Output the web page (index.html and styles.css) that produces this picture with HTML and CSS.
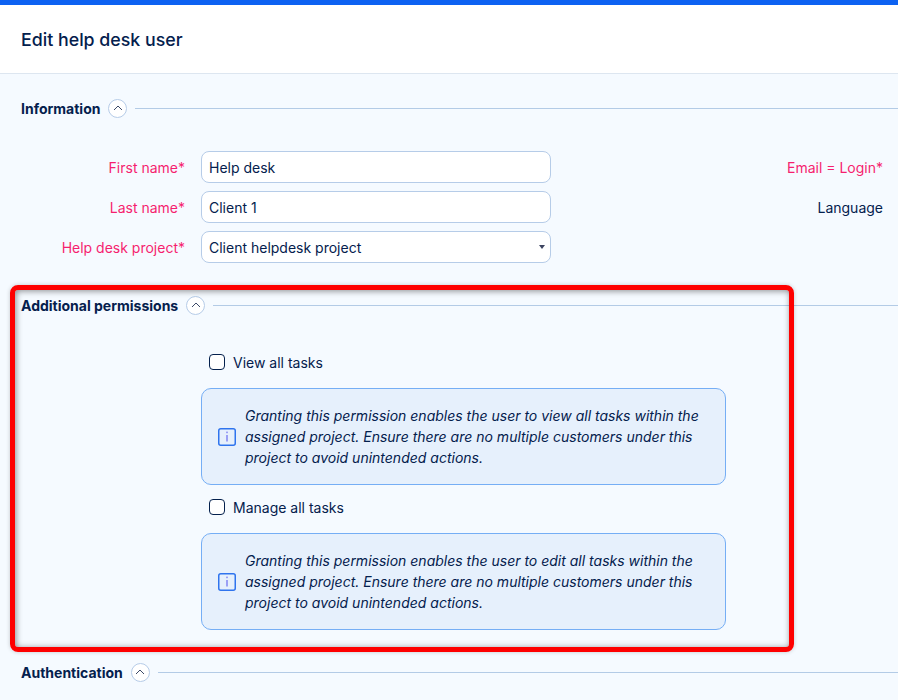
FILE: index.html
```html
<!DOCTYPE html>
<html lang="en">
<head>
<meta charset="utf-8">
<title>Edit help desk user</title>
<link rel="stylesheet" href="styles.css">
</head>
<body>
<div class="page">
  <header class="header"><h1>Edit help desk user</h1></header>
  <main class="content">
    <section class="section info">
      <div class="section-head">
        <h2>Information</h2>
        <button class="toggle" type="button" aria-label="Collapse"><svg viewBox="0 0 10 6" width="10" height="6"><path d="M1 5 L5 1 L9 5" fill="none" stroke="#3c4a68" stroke-width="1"/></svg></button>
        <span class="rule"></span>
      </div>
      <div class="form">
        <div class="form-left">
          <div class="row"><label class="req">First name*</label><input class="field" type="text" value="Help desk"></div>
          <div class="row"><label class="req">Last name*</label><input class="field" type="text" value="Client 1"></div>
          <div class="row"><label class="req">Help desk project*</label>
            <div class="field select">Client helpdesk project<span class="caret"></span></div>
          </div>
        </div>
        <div class="form-right">
          <div class="row"><label class="req">Email = Login*</label></div>
          <div class="row"><label>Language</label></div>
        </div>
      </div>
    </section>

    <section class="section perms">
      <div class="section-head">
        <h2>Additional permissions</h2>
        <button class="toggle" type="button" aria-label="Collapse"><svg viewBox="0 0 10 6" width="10" height="6"><path d="M1 5 L5 1 L9 5" fill="none" stroke="#3c4a68" stroke-width="1"/></svg></button>
        <span class="rule"></span>
      </div>
      <div class="perm-body">
        <div class="check"><span class="box"></span>View all tasks</div>
        <div class="callout">
          <svg class="info-icon" viewBox="0 0 18 18" width="18" height="18"><rect x="0.75" y="0.75" width="16.5" height="16.5" rx="2" fill="none" stroke="#2f74ee" stroke-width="1.5"/><rect x="8.4" y="7" width="1.2" height="6.5" fill="#6a6cf0"/><rect x="8.4" y="3.6" width="1.2" height="1.6" fill="#6a6cf0"/></svg>
          <p>Granting this permission enables the user to view all tasks within the assigned project. Ensure there are no multiple customers under this project to avoid unintended actions.</p>
        </div>
        <div class="check check-second"><span class="box"></span>Manage all tasks</div>
        <div class="callout">
          <svg class="info-icon" viewBox="0 0 18 18" width="18" height="18"><rect x="0.75" y="0.75" width="16.5" height="16.5" rx="2" fill="none" stroke="#2f74ee" stroke-width="1.5"/><rect x="8.4" y="7" width="1.2" height="6.5" fill="#6a6cf0"/><rect x="8.4" y="3.6" width="1.2" height="1.6" fill="#6a6cf0"/></svg>
          <p>Granting this permission enables the user to edit all tasks within the assigned project. Ensure there are no multiple customers under this project to avoid unintended actions.</p>
        </div>
      </div>
    </section>

    <section class="section auth">
      <div class="section-head">
        <h2>Authentication</h2>
        <button class="toggle" type="button" aria-label="Collapse"><svg viewBox="0 0 10 6" width="10" height="6"><path d="M1 5 L5 1 L9 5" fill="none" stroke="#3c4a68" stroke-width="1"/></svg></button>
        <span class="rule"></span>
      </div>
    </section>
  </main>
  <div class="annotation"></div>
</div>
</body>
</html>
```
FILE: styles.css
```css
* { box-sizing: border-box; }
html, body { margin: 0; padding: 0; height: 100%; overflow: hidden; }
body {
  font-family: Inter, "Liberation Sans", sans-serif;
  font-size: 14px;
  color: #04204d;
  background: #f5faff;
}
.page { position: relative; height: 700px; overflow: hidden; border-top: 5px solid #0d62f2; }
.header {
  height: 69px;
  background: #fff;
  border-bottom: 1px solid #dde6f0;
  padding: 0 21px;
  display: flex;
  align-items: center;
}
.header h1 { margin: 0; font-size: 17.8px; font-weight: 500; color: #04204d; }
.content { padding-top: 22px; }
.section-head { display: flex; align-items: center; height: 24px; padding-left: 21px; }
.section-head h2 { margin: 0; font-size: 14px; font-weight: 700; color: #04204d; white-space: nowrap; }
.toggle {
  width: 19px; height: 19px; margin-left: 8px; padding: 0;
  border: 1px solid #b6cce8; border-radius: 50%;
  background: #fff;
  display: flex; align-items: center; justify-content: center;
}
.rule { flex: 1; height: 1px; background: #b3cbe6; margin-left: 8px; }
.form { display: flex; justify-content: space-between; margin-top: 31px; padding-right: 15px; }
.row { display: flex; align-items: center; height: 32px; margin-bottom: 8px; }
.form-left label { width: 185px; margin-right: 16px; text-align: right; }
.form-right label { text-align: right; }
.form-right { display: flex; flex-direction: column; align-items: flex-end; }
.req { color: #f51f6f; }
.field {
  width: 350px; height: 32px;
  border: 1px solid #b6cce8; border-radius: 8px;
  background: #fff; padding: 0 7px;
  font: inherit; color: #04204d;
  display: flex; align-items: center;
  position: relative;
}
.caret {
  position: absolute; right: 5px; top: 13px;
  border-left: 3.5px solid transparent; border-right: 3.5px solid transparent;
  border-top: 4px solid #3c4460;
}
.perms { margin-top: 22px; }
.perm-body { margin: 35px 0 0 201px; width: 525px; }
.check { display: flex; align-items: center; height: 20px; padding-left: 8px; }
.box {
  width: 16px; height: 16px; margin-right: 8px;
  border: 1.3px solid #04204d; border-radius: 4px; background: #fff;
}
.callout {
  margin-top: 16px;
  height: 97px;
  border: 1px solid #75aef5; border-radius: 10px;
  background: #e6f0fc;
  display: flex; align-items: center;
  padding: 0 16px;
}
.info-icon { flex: none; margin: 1px 9px 0 0; }
.callout p { margin: 0; font-style: italic; line-height: 21px; color: #04204d; }
.check-second { margin-top: 12px; }
.auth { margin-top: 30px; }
.annotation {
  position: absolute; left: 10px; top: 280px;
  width: 784px; height: 367px;
  border: 5px solid #fe0000; border-radius: 8px;
  box-shadow: 0 0 4px rgba(0,0,0,.2), inset 1px 1px 6px rgba(0,0,0,.45);
  pointer-events: none;
}
```
